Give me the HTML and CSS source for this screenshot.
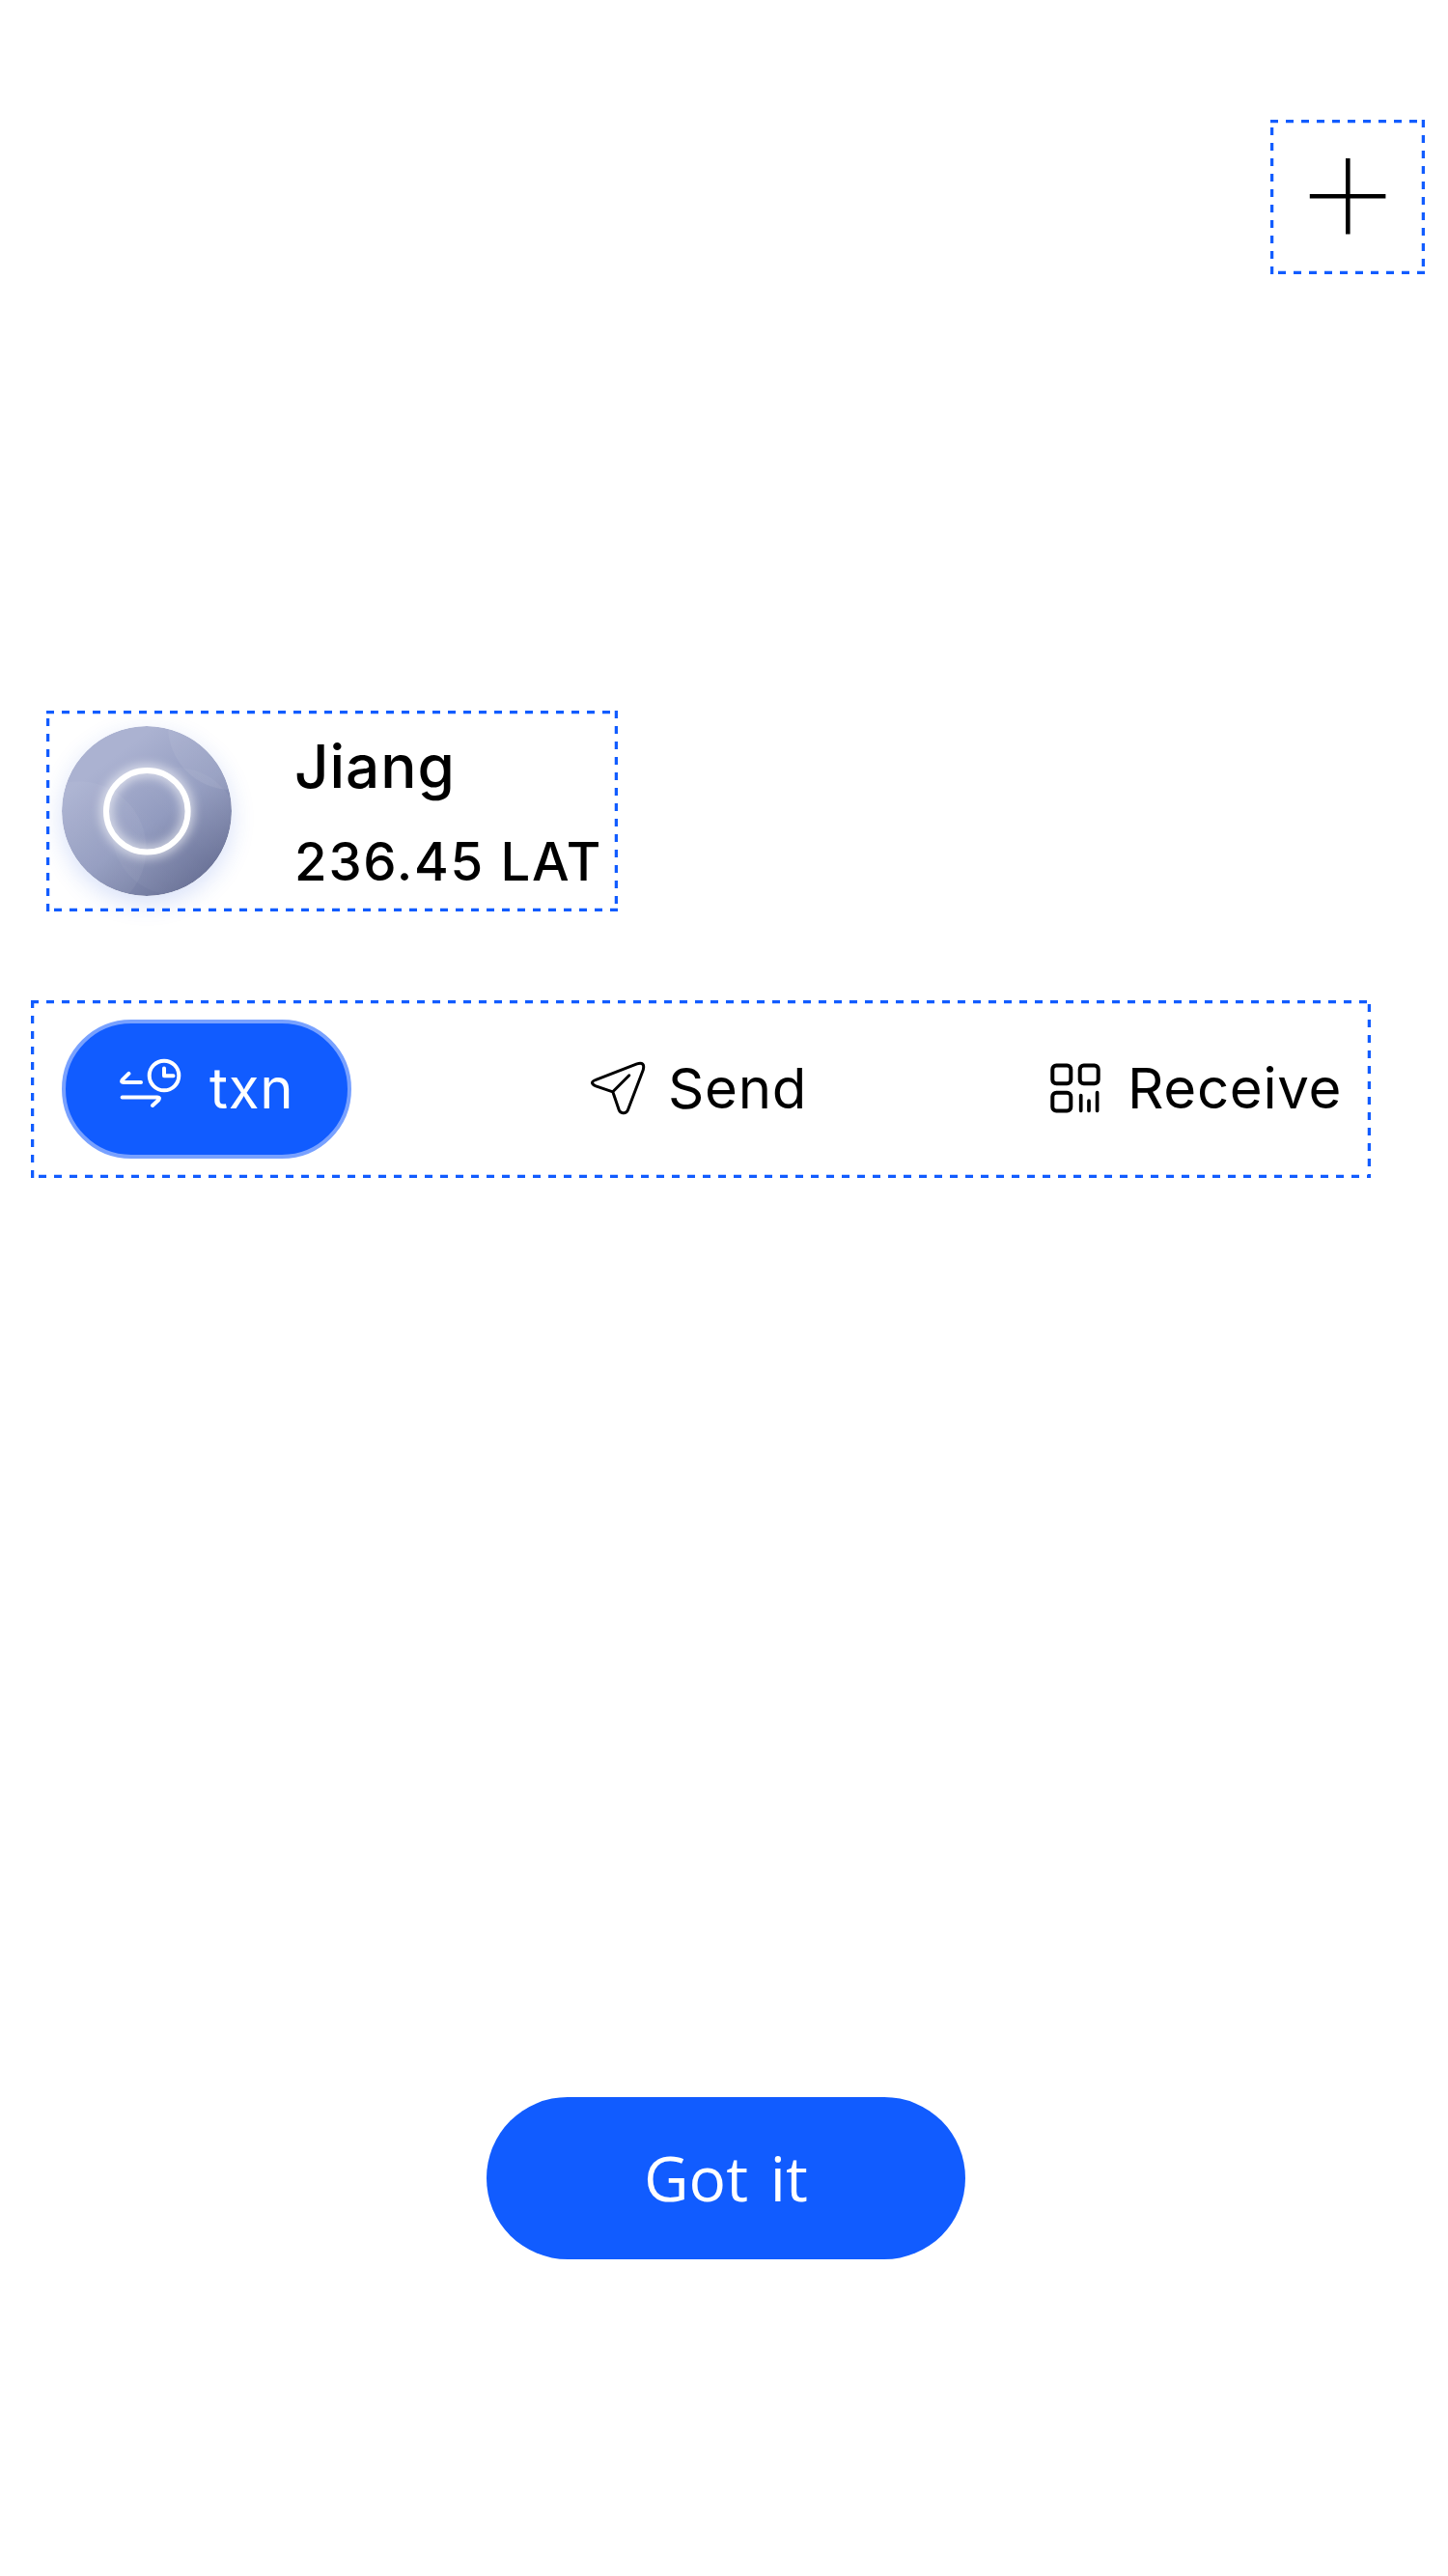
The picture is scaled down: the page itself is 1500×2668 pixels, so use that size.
FILE: index.html
```html
<!DOCTYPE html>
<html lang="en">
<head>
<meta charset="utf-8">
<title>Wallet guide</title>
<link rel="stylesheet" href="styles.css">
</head>
<body>
<main class="guide">
  <button class="frame add" aria-label="Add">
    <svg class="outline"><rect width="100%" height="100%"/></svg>
    <svg width="80" height="80" viewBox="0 0 80 80" stroke="#000" stroke-width="4.6"><path d="M.8 40.3H79.4M40.3 1V79.6"/></svg>
  </button>

  <section class="frame account">
    <svg class="outline"><rect width="100%" height="100%"/></svg>
    <svg class="avatar" viewBox="0 0 176 176">
      <defs>
        <linearGradient id="base" x1=".28" y1=".2" x2=".82" y2=".92">
          <stop offset="0" stop-color="#abb2d1"/><stop offset=".5" stop-color="#929bbf"/><stop offset="1" stop-color="#697196"/>
        </linearGradient>
        <linearGradient id="sheen" x1="0" y1="0" x2="1" y2="1">
          <stop offset="0" stop-color="#fff" stop-opacity=".04"/><stop offset="1" stop-color="#fff" stop-opacity=".1"/>
        </linearGradient>
        <linearGradient id="sheen-left" x1="0" y1="0" x2="1" y2=".5">
          <stop offset="0" stop-color="#fff" stop-opacity=".03"/><stop offset="1" stop-color="#fff" stop-opacity=".05"/>
        </linearGradient>
        <linearGradient id="shade" x1="0" y1="1" x2="1" y2="0">
          <stop offset="0" stop-color="#fff" stop-opacity=".05"/><stop offset=".5" stop-color="#fff" stop-opacity="0"/><stop offset="1" stop-color="#fff" stop-opacity=".06"/>
        </linearGradient>
        <clipPath id="disc"><circle cx="88" cy="88" r="88"/></clipPath>
        <filter id="glow" x="-50%" y="-50%" width="200%" height="200%"><feGaussianBlur stdDeviation="6"/></filter>
      </defs>
      <g clip-path="url(#disc)">
        <rect width="176" height="176" fill="url(#base)"/>
        <circle cx="18" cy="127" r="69.5" fill="url(#sheen-left)"/>
        <circle cx="118" cy="109" r="66" fill="url(#shade)"/>
        <circle cx="176" cy="0" r="66" fill="url(#sheen)"/>
      </g>
      <circle cx="88.3" cy="88.3" r="42.3" fill="none" stroke="#fff" stroke-width="10" opacity=".75" filter="url(#glow)"/>
      <circle cx="88.3" cy="88.3" r="42.3" fill="none" stroke="#fff" stroke-width="6"/>
    </svg>
    <div class="details">
      <div class="name">Jiang</div>
      <div class="balance">236.45 LAT</div>
    </div>
  </section>

  <nav class="frame actions">
    <svg class="outline"><rect width="100%" height="100%"/></svg>
    <button class="action txn">
      <svg width="64" height="52" viewBox="0 0 64 52" fill="none" stroke="#fff" stroke-width="4" stroke-linecap="round" stroke-linejoin="round"><circle cx="46" cy="18" r="15.3"/><path d="M46 10.6V18.3H55.5M9.4 15.9L2.8 22.4Q1 25 4 25H22M2.6 40.5H39Q42 40.5 40.3 43.2L34 49"/></svg>
      <span>txn</span>
    </button>
    <button class="action send">
      <svg width="60" height="60" viewBox="0 0 60 60" fill="none" stroke="#000" stroke-width="3" stroke-linecap="round" stroke-linejoin="round"><path d="M7.3 20.3L49.8 3.9Q58.5 1.4 56.3 10L40.2 52.2Q38.7 55.3 35.2 54.7Q32.3 54.4 31.2 51.5L24.8 32.8L7.3 26.8Q3.4 25.3 3.5 23.2Q3.6 21.6 7.3 20.3ZM24.8 32.8L41.8 15.8"/></svg>
      <span>Send</span>
    </button>
    <button class="action receive">
      <svg width="52" height="52" viewBox="0 0 52 52" fill="none" stroke="#000" stroke-width="4" stroke-linecap="round"><rect x="2.3" y="2.4" width="19" height="18.9" rx="4"/><rect x="30.7" y="2.4" width="19" height="18.9" rx="4"/><rect x="2.3" y="30.7" width="19" height="18.9" rx="4"/><path stroke-width="3.7" d="M31.7 33.5V49.3M40 39V49.3M48.6 30.5V49.3"/></svg>
      <span>Receive</span>
    </button>
  </nav>

  <button class="confirm">Got it</button>
</main>
</body>
</html>
```
FILE: styles.css
```css
* { box-sizing: border-box; }
body {
  margin: 0;
  background: #fff;
  color: #000;
  font-family: Inter, "Liberation Sans", sans-serif;
}
button {
  margin: 0;
  padding: 0;
  border: 0;
  background: none;
  color: inherit;
  font: inherit;
}
svg { display: block; flex: none; }
.guide {
  display: flex;
  flex-direction: column;
  align-items: flex-start;
  width: 1500px;
  height: 2668px;
  padding-top: 124px;
}
.frame { position: relative; display: flex; }
.outline {
  position: absolute;
  inset: 0;
  width: 100%;
  height: 100%;
  overflow: hidden;
  pointer-events: none;
}
/* only the inner half of the stroke stays visible */
.outline rect {
  fill: none;
  stroke: #115cff;
  stroke-width: 6.5px;
  stroke-dasharray: 8 8;
}
.add {
  align-self: flex-end;
  width: 160px;
  height: 160px;
  margin-right: 24px;
  padding: 39px 0 0 40px;
}
.account {
  width: 592px;
  height: 208px;
  margin: 452px 0 0 48px;
  padding: 16px 0 0 16px;
}
.avatar {
  width: 176px;
  height: 176px;
  border-radius: 50%;
  box-shadow: 0 8px 24px rgba(40, 90, 220, .18);
}
.details {
  display: flex;
  flex-direction: column;
  padding-left: 65px;
  font-weight: 500;
  white-space: nowrap;
}
.name {
  height: 96px;
  font-size: 62px;
  line-height: 83px;
  letter-spacing: .9px;
}
.balance {
  font-size: 54.5px;
  line-height: 88px;
  letter-spacing: 1.8px;
}
.actions {
  width: 1388px;
  height: 184px;
  margin: 92px 0 0 32px;
  padding: 20px 0 0 32px;
}
.action {
  display: flex;
  align-items: center;
  height: 144px;
  font-size: 58.2px;
  line-height: 72px;
  letter-spacing: .7px;
  white-space: nowrap;
}
.action span { padding-bottom: 3px; }
.txn {
  width: 300px;
  padding-left: 56px;
  gap: 29px;
  border: 4px solid #78a1ff;
  border-radius: 72px;
  background: #115cff;
  color: #fff;
}
.txn svg { margin-top: -12px; }
.send { width: 225px; margin-left: 246px; gap: 22px; }
.receive { margin-left: 253px; gap: 28px; }
.receive svg { margin-top: -2px; }
.confirm {
  width: 496px;
  height: 168px;
  margin: 952px 0 0 504px;
  padding-bottom: 2px;
  border-radius: 84px;
  background: #115cff;
  color: #fff;
  font-family: "Open Sans", "Noto Sans", sans-serif;
  font-size: 64px;
  font-weight: 400;
  letter-spacing: .1px;
  word-spacing: 6px;
}
```
